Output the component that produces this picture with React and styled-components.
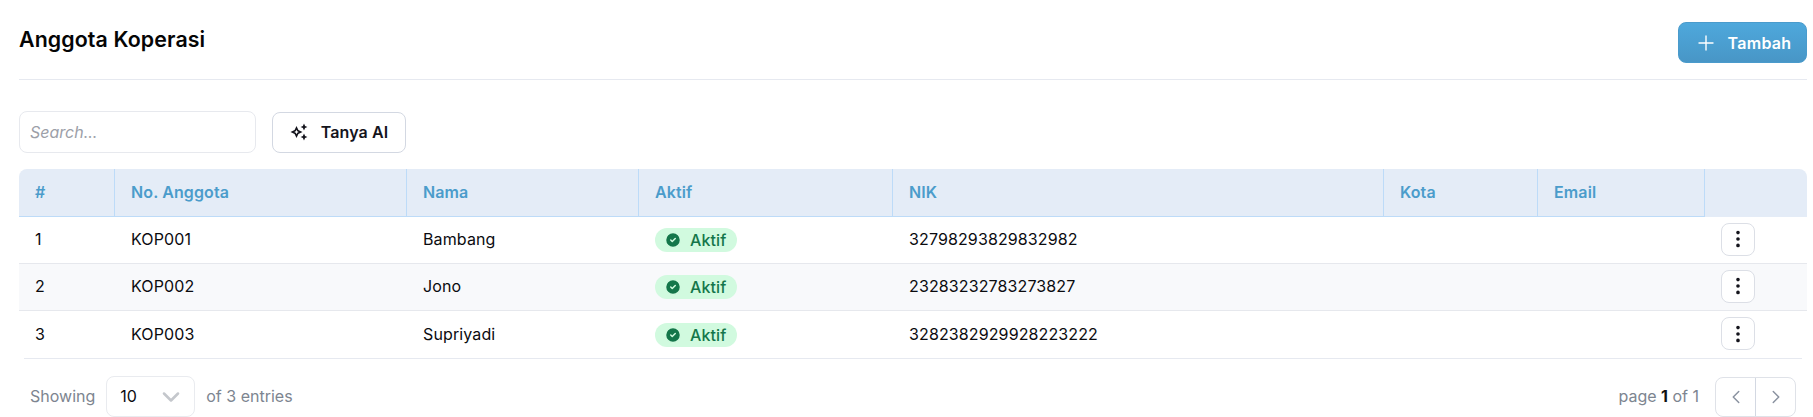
import React from 'react';
import styled, { createGlobalStyle } from 'styled-components';
import { Plus, ChevronDown, ChevronLeft, ChevronRight, EllipsisVertical, CircleCheck } from 'lucide-react';

const GlobalStyle = createGlobalStyle`
  html, body {
    margin: 0;
    padding: 0;
    background: #fff;
    overflow: hidden;
  }
  body {
    font-family: Inter, "Liberation Sans", sans-serif;
    color: #0b0b0f;
  }
`;

const Page = styled.div`
  width: 1813px;
  height: 417px;
  padding: 0 6px 0 19px;
  box-sizing: border-box;
  overflow: hidden;
`;

const Header = styled.div`
  display: flex;
  justify-content: space-between;
  align-items: flex-start;
  height: 80px;
  padding-top: 22px;
  box-sizing: border-box;
  border-bottom: 1px solid #e6e9f0;
`;

const Title = styled.h1`
  margin: 4px 0 0;
  font-size: 21.33px;
  line-height: 26px;
  font-weight: 600;
  letter-spacing: 0.12px;
  color: #050505;
`;

const AddButton = styled.button`
  display: flex;
  align-items: center;
  justify-content: center;
  gap: 10px;
  width: 129px;
  height: 41px;
  padding: 0;
  border: 1px solid #4a9bcc;
  border-radius: 8px;
  background: linear-gradient(180deg, #4ea8dc 0%, #4896c6 100%);
  color: #fff;
  font: 600 16px Inter, sans-serif;
  letter-spacing: 0.3px;
`;

const Toolbar = styled.div`
  display: flex;
  align-items: center;
  gap: 16px;
  margin-top: 31px;
  height: 42px;
`;

const SearchBox = styled.input`
  width: 237px;
  height: 42px;
  box-sizing: border-box;
  padding: 0 10px;
  border: 1px solid #e7e9ee;
  border-radius: 8px;
  font: italic 400 16px Inter, sans-serif;
  outline: none;
  &::placeholder {
    color: #9ca0a8;
    opacity: 1;
  }
`;

const AskButton = styled.button`
  display: flex;
  align-items: center;
  justify-content: center;
  gap: 13px;
  width: 134px;
  height: 41px;
  padding: 0;
  border: 1px solid #d3d8e2;
  border-radius: 8px;
  background: #fff;
  color: #14141c;
  font: 600 16px Inter, sans-serif;
  letter-spacing: 0.12px;
`;

const Table = styled.table`
  width: 1788px;
  margin-top: 16px;
  table-layout: fixed;
  border-collapse: separate;
  border-spacing: 0;
  font-size: 16px;
  letter-spacing: 0.12px;
`;

const HeadCell = styled.th`
  height: 48px;
  padding: 0 16px 2px;
  box-sizing: border-box;
  background: #e4ecf7;
  color: #4b9ccb;
  font-weight: 600;
  font-size: 16px;
  text-align: left;
  border-right: ${p => (p.$last ? '0' : '1px solid #bddbf8')};
  border-bottom: 1px solid ${p => (p.$last ? '#e4ecf7' : '#bddbf8')};
  border-top-left-radius: ${p => (p.$first ? '8px' : '0')};
  border-top-right-radius: ${p => (p.$last ? '8px' : '0')};
`;

const Row = styled.tr`
  background: ${p => (p.$striped ? '#f8f9fb' : '#fff')};
`;

const Cell = styled.td`
  height: 47px;
  padding: 0 16px ${p => (p.$flush ? '0' : '2px')};
  box-sizing: border-box;
  border-bottom: ${p => (p.$end ? '0' : '1px solid #e6e8ed')};
  color: #0b0b0f;
  font-size: 16px;
`;

const TableEnd = styled.div`
  height: 1px;
  margin: 0 5px;
  background: #e6e9f0;
`;

const Badge = styled.span`
  display: inline-flex;
  align-items: center;
  gap: 8px;
  height: 24px;
  padding: 0 11px 0 9px;
  border-radius: 12px;
  background: #d1fadf;
  color: #14764a;
  font-size: 16px;
  font-weight: 500;
  vertical-align: middle;
`;

const MenuButton = styled.button`
  display: flex;
  align-items: center;
  justify-content: center;
  width: 34px;
  height: 33px;
  padding: 0;
  border: 1px solid #dcdfe6;
  border-radius: 8px;
  background: #fff;
  color: #14141c;
`;

const Footer = styled.div`
  display: flex;
  justify-content: space-between;
  align-items: center;
  height: 41px;
  margin-top: 17px;
  padding: 0 11px;
  font-size: 16px;
  color: #7d8590;
`;

const Group = styled.div`
  display: flex;
  align-items: center;
  gap: ${p => p.$gap || 11}px;
`;

const FooterText = styled.span`
  padding-bottom: 2px;
  b {
    color: #111;
    font-weight: 700;
  }
`;

const PageSelect = styled.div`
  display: flex;
  align-items: center;
  justify-content: space-between;
  width: 89px;
  height: 41px;
  box-sizing: border-box;
  padding: 0 9px 0 13px;
  border: 1px solid #e9ebef;
  border-radius: 8px;
  color: #0b0b0f;
`;

const PagerGroup = styled.div`
  display: flex;
  width: 81px;
  height: 40px;
  box-sizing: border-box;
  border: 1px solid #dfe2e8;
  border-radius: 8px;
`;

const PagerButton = styled.button`
  flex: 1;
  display: flex;
  align-items: center;
  justify-content: center;
  padding: 0;
  border: 0;
  border-left: ${p => (p.$divided ? '1px solid #d3d8e2' : '0')};
  background: transparent;
  color: #8a92a0;
`;

const SparkIcon = () => (
  <svg width="18" height="18" viewBox="0 0 18 18" fill="currentColor">
    <path d="M6.5 3 L8.4 7.1 L12.5 9 L8.4 10.9 L6.5 15 L4.6 10.9 L0.5 9 L4.6 7.1 Z M6.5 6.8 L5.8 8.3 L4.3 9 L5.8 9.7 L6.5 11.2 L7.2 9.7 L8.7 9 L7.2 8.3 Z" fillRule="evenodd" />
    <path d="M14 0.6 L15.1 2.9 L17.4 4 L15.1 5.1 L14 7.4 L12.9 5.1 L10.6 4 L12.9 2.9 Z" />
    <path d="M14 10.6 L15.1 12.9 L17.4 14 L15.1 15.1 L14 17.4 L12.9 15.1 L10.6 14 L12.9 12.9 Z" />
  </svg>
);

const columns = [
  { label: '#', width: 96 },
  { label: 'No. Anggota', width: 292 },
  { label: 'Nama', width: 232 },
  { label: 'Aktif', width: 254 },
  { label: 'NIK', width: 491 },
  { label: 'Kota', width: 154 },
  { label: 'Email', width: 167 },
  { label: '', width: 102 },
];

const members = [
  { no: 1, code: 'KOP001', name: 'Bambang', nik: '32798293829832982' },
  { no: 2, code: 'KOP002', name: 'Jono', nik: '23283232783273827' },
  { no: 3, code: 'KOP003', name: 'Supriyadi', nik: '3282382929928223222' },
];

const App = () => (
  <Page>
    <GlobalStyle />
    <Header>
      <Title>Anggota Koperasi</Title>
      <AddButton><Plus size={24} strokeWidth={1.4} /> Tambah</AddButton>
    </Header>
    <Toolbar>
      <SearchBox placeholder="Search..." />
      <AskButton><SparkIcon /> Tanya AI</AskButton>
    </Toolbar>
    <Table>
      <colgroup>
        {columns.map((c, i) => <col key={i} width={c.width} />)}
      </colgroup>
      <thead>
        <tr>
          {columns.map((c, i) => (
            <HeadCell key={i} $first={i === 0} $last={i === columns.length - 1}>{c.label}</HeadCell>
          ))}
        </tr>
      </thead>
      <tbody>
        {members.map((m, i) => {
          const end = i === members.length - 1;
          return (
            <Row key={m.no} $striped={i === 1}>
              <Cell $end={end}>{m.no}</Cell>
              <Cell $end={end}>{m.code}</Cell>
              <Cell $end={end}>{m.name}</Cell>
              <Cell $end={end} $flush><Badge><CircleCheck size={18} fill="#14764a" color="#d1fadf" strokeWidth={2} /> Aktif</Badge></Cell>
              <Cell $end={end}>{m.nik}</Cell>
              <Cell $end={end} />
              <Cell $end={end} />
              <Cell $end={end}><MenuButton><EllipsisVertical size={22} strokeWidth={2} /></MenuButton></Cell>
            </Row>
          );
        })}
      </tbody>
    </Table>
    <TableEnd />
    <Footer>
      <Group>
        <FooterText>Showing</FooterText>
        <PageSelect><FooterText>10</FooterText> <ChevronDown size={28} color="#c4c7cc" strokeWidth={2.2} /></PageSelect>
        <FooterText>of 3 entries</FooterText>
      </Group>
      <Group $gap={16}>
        <FooterText>page <b>1</b> of 1</FooterText>
        <PagerGroup>
          <PagerButton><ChevronLeft size={22} strokeWidth={1.6} /></PagerButton>
          <PagerButton $divided><ChevronRight size={22} strokeWidth={1.6} /></PagerButton>
        </PagerGroup>
      </Group>
    </Footer>
  </Page>
);

export default App;
